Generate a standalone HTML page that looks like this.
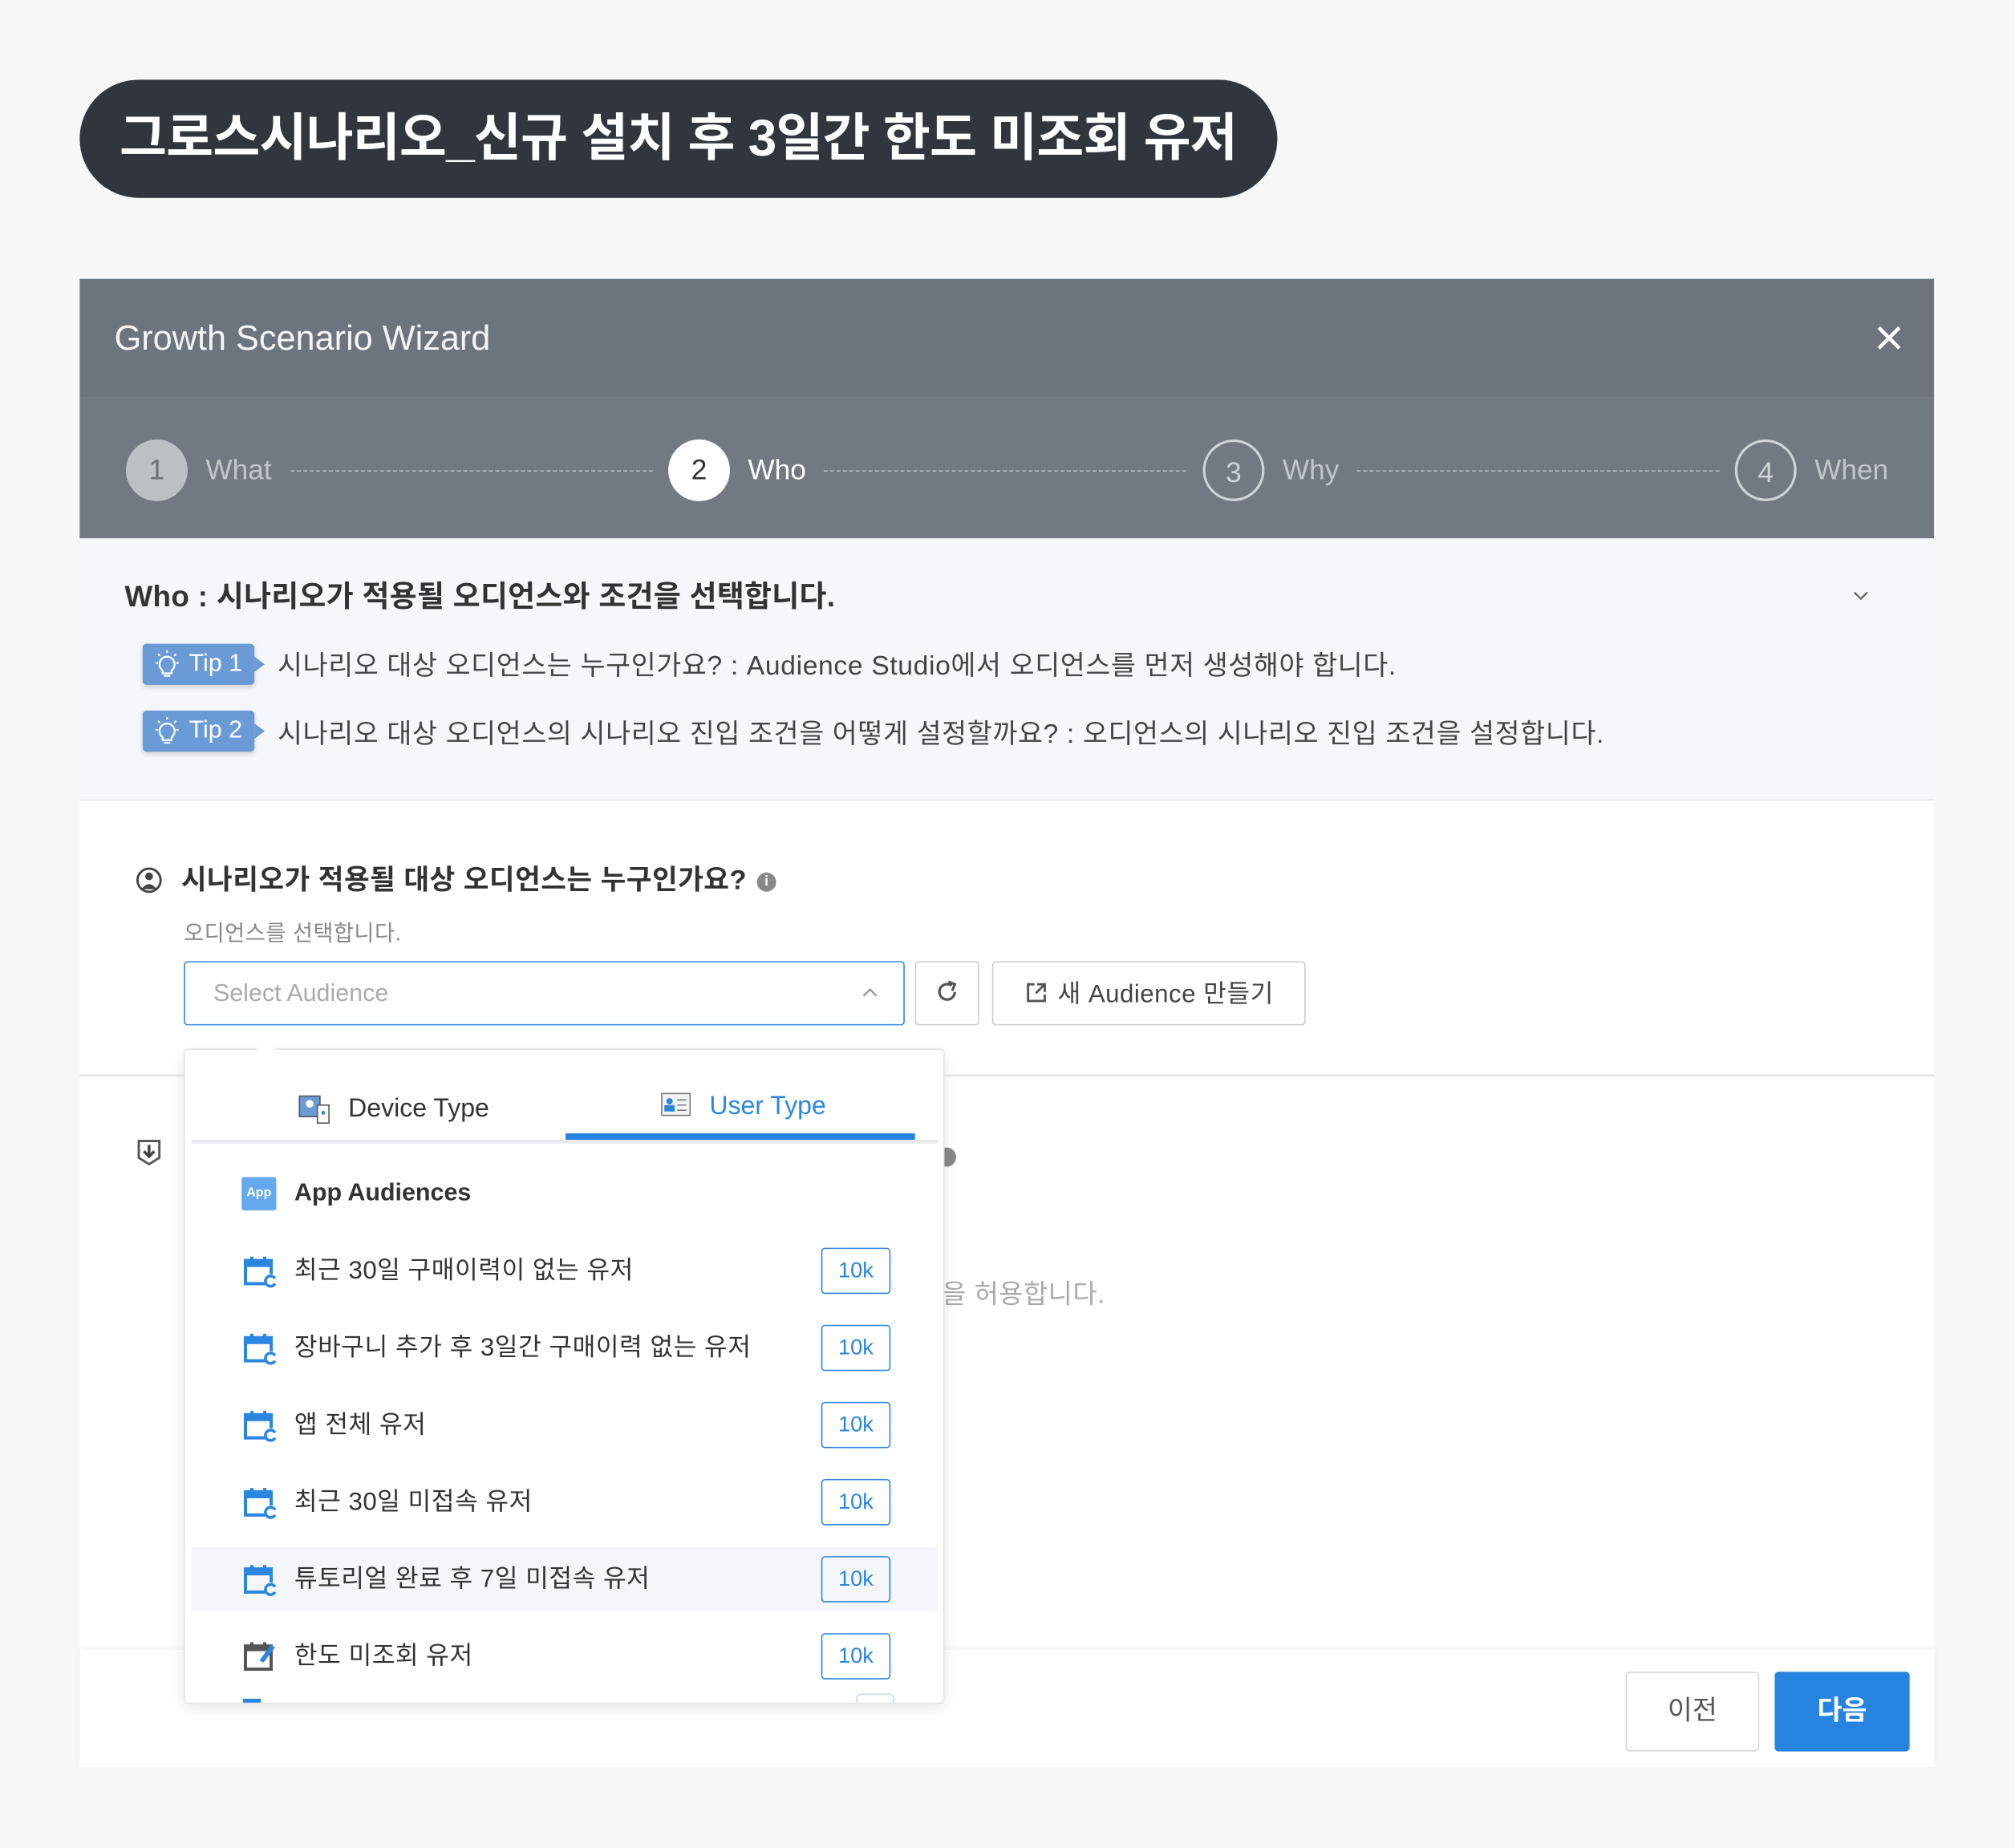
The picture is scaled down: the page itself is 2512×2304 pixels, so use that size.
<!DOCTYPE html>
<html><head><meta charset="utf-8"><style>
html,body{margin:0;padding:0;width:2512px;height:2304px;overflow:hidden;background:#f7f7f7}
#s{position:absolute;left:0;top:0;width:1568px;height:1438px;transform:scale(1.60204);transform-origin:0 0;font-family:"Liberation Sans","Noto Sans CJK KR",sans-serif;color:#333}
.a{position:absolute}
.pill{left:62px;top:62px;width:932px;height:92px;border-radius:46px;background:#30363c;color:#fff;font-size:40px;font-weight:bold;line-height:92px;padding-left:31px;box-sizing:border-box;letter-spacing:-0.5px}
.circ{width:48px;height:48px;border-radius:50%;box-sizing:border-box;text-align:center;line-height:48px;font-size:22px}
.lbl{font-size:22px;line-height:30px}
.dot{height:0;border-top:1.5px dashed #b9bec4}
.tip{width:87px;height:32px;background:#6a9bd6;border-radius:3px;color:#fff;font-size:19px;line-height:32px;box-shadow:0 2px 4px rgba(0,0,0,.15)}
.tip:after{content:"";position:absolute;right:-8px;top:10px;border-left:8px solid #6a9bd6;border-top:6px solid transparent;border-bottom:6px solid transparent}
.tt{font-size:21px;color:#444;line-height:30px;letter-spacing:0.4px;white-space:nowrap}
.row{left:5px;width:581px;height:50px}
.row .t{position:absolute;left:80px;top:10px;font-size:19.5px;line-height:30px;color:#333;letter-spacing:0.3px}
.row .k{position:absolute;left:490px;top:7px;width:52px;height:34px;border:1.5px solid #2b86e0;border-radius:3px;color:#2b86e0;font-size:17px;text-align:center;line-height:34px}
.row svg{position:absolute;left:40px;top:12px}
</style></head><body><div id="s">
<div class="a pill">그로스시나리오_신규 설치 후 3일간 한도 미조회 유저</div>

<div class="a" style="left:62px;top:217px;width:1443px;height:1158px;background:#fff"></div>
<div class="a" style="left:62px;top:217px;width:1443px;height:92px;background:#6c747e"></div>
<div class="a" style="left:89px;top:246px;color:#f4f5f6;font-size:27px;line-height:34px">Growth Scenario Wizard</div>
<svg class="a" style="left:1459px;top:252px" width="22" height="22"><path d="M3 3L19 19M19 3L3 19" stroke="#fff" stroke-width="2.8"/></svg>
<div class="a" style="left:62px;top:309px;width:1443px;height:110px;background:#727983"></div>
<div class="a circ" style="left:98px;top:342px;background:#bcbfc3;color:#6c7178">1</div>
<div class="a lbl" style="left:160px;top:351px;color:#c2c6ca">What</div>
<div class="a dot" style="left:226px;top:366px;width:282px"></div>
<div class="a circ" style="left:520px;top:342px;background:#fff;color:#333">2</div>
<div class="a lbl" style="left:582px;top:351px;color:#fff">Who</div>
<div class="a dot" style="left:641px;top:366px;width:282px"></div>
<div class="a circ" style="left:936px;top:342px;border:2px solid #d0d4d8;color:#d0d4d8">3</div>
<div class="a lbl" style="left:998px;top:351px;color:#c2c6ca">Why</div>
<div class="a dot" style="left:1056px;top:366px;width:282px"></div>
<div class="a circ" style="left:1350px;top:342px;border:2px solid #d0d4d8;color:#d0d4d8">4</div>
<div class="a lbl" style="left:1412px;top:351px;color:#c2c6ca">When</div>

<div class="a" style="left:62px;top:419px;width:1443px;height:203px;background:#f5f7fb;border-bottom:1.5px solid #e4e8f0"></div>
<div class="a" style="left:97px;top:449px;font-size:23px;font-weight:bold;color:#333;line-height:30px;letter-spacing:0.2px">Who : 시나리오가 적용될 오디언스와 조건을 선택합니다.</div>
<svg class="a" style="left:1442px;top:460px" width="12" height="8"><path d="M1 1L6 6L11 1" stroke="#666" stroke-width="1.5" fill="none"/></svg>
<div class="a tip" style="left:111px;top:501px"><svg class="a" style="left:9px;top:4px" width="20" height="24"><path d="M10 6a6 6 0 0 0-3.5 10.8V19h7v-2.2A6 6 0 0 0 10 6z M7.5 21h5" stroke="#fff" stroke-width="1.4" fill="none"/><path d="M10 1v2M3 4l1.5 1.5M17 4l-1.5 1.5M1 11h2M17 11h2" stroke="#fff" stroke-width="1.2"/></svg><span style="position:absolute;left:36px;top:0">Tip 1</span></div>
<div class="a tt" style="left:216px;top:504px">시나리오 대상 오디언스는 누구인가요? : Audience Studio에서 오디언스를 먼저 생성해야 합니다.</div>
<div class="a tip" style="left:111px;top:553px"><svg class="a" style="left:9px;top:4px" width="20" height="24"><path d="M10 6a6 6 0 0 0-3.5 10.8V19h7v-2.2A6 6 0 0 0 10 6z M7.5 21h5" stroke="#fff" stroke-width="1.4" fill="none"/><path d="M10 1v2M3 4l1.5 1.5M17 4l-1.5 1.5M1 11h2M17 11h2" stroke="#fff" stroke-width="1.2"/></svg><span style="position:absolute;left:36px;top:0">Tip 2</span></div>
<div class="a tt" style="left:216px;top:557px">시나리오 대상 오디언스의 시나리오 진입 조건을 어떻게 설정할까요? : 오디언스의 시나리오 진입 조건을 설정합니다.</div>

<svg class="a" style="left:105px;top:674px" width="22" height="22"><circle cx="11" cy="11" r="9" fill="none" stroke="#444" stroke-width="1.8"/><circle cx="11" cy="8" r="3" fill="#444"/><path d="M5 18Q11 10 17 18Z" fill="#444"/></svg>
<div class="a" style="left:141px;top:670px;font-size:21.5px;font-weight:bold;color:#333;line-height:30px;letter-spacing:0.3px">시나리오가 적용될 대상 오디언스는 누구인가요?</div>
<div class="a" style="left:589px;top:679px;width:15px;height:15px;border-radius:50%;background:#888;color:#fff;font-size:11px;text-align:center;line-height:15px;font-weight:bold">i</div>
<div class="a" style="left:143px;top:715px;font-size:17px;color:#888;line-height:24px;letter-spacing:0.3px">오디언스를 선택합니다.</div>
<div class="a" style="left:143px;top:748px;width:561px;height:50px;border:1.5px solid #2b86e0;border-radius:3px;box-sizing:border-box"></div>
<div class="a" style="left:166px;top:759px;font-size:19px;color:#aaa;line-height:30px">Select Audience</div>
<svg class="a" style="left:671px;top:768px" width="12" height="8"><path d="M1 7L6 2L11 7" stroke="#999" stroke-width="1.5" fill="none"/></svg>
<div class="a" style="left:712px;top:748px;width:50px;height:50px;border:1.5px solid #ccc;border-radius:3px;box-sizing:border-box"></div>
<svg class="a" style="left:726px;top:761px" width="22" height="22"><path d="M17 11A6 6 0 1 1 14.5 6" stroke="#555" stroke-width="2" fill="none"/><path d="M12 3L17 5L15 10" stroke="#555" stroke-width="2" fill="none"/></svg>
<div class="a" style="left:772px;top:748px;width:244px;height:50px;border:1.5px solid #ccc;border-radius:3px;box-sizing:border-box"></div>
<svg class="a" style="left:798px;top:764px" width="17" height="17"><path d="M7 2H2V15H15V10M9 2H15V8M15 2L8 9" stroke="#555" stroke-width="1.8" fill="none"/></svg>
<div class="a" style="left:823px;top:759px;font-size:19.5px;color:#444;line-height:30px;letter-spacing:0.3px">새 Audience 만들기</div>
<div class="a" style="left:62px;top:836px;width:1443px;height:1.5px;background:#e6e8ec"></div>

<svg class="a" style="left:105px;top:886px" width="22" height="22"><path d="M3 2H19V15L11 20L3 15Z" fill="none" stroke="#555" stroke-width="1.8"/><path d="M11 5V13M7 10L11 14L15 10" stroke="#444" stroke-width="2.2" fill="none"/></svg>
<div class="a" style="left:729px;top:893px;width:15px;height:15px;border-radius:50%;background:#888"></div>
<div class="a" style="left:733px;top:993px;font-size:20.5px;color:#aaa;line-height:30px;letter-spacing:0.3px">을 허용합니다.</div>

<div class="a" style="left:62px;top:1284px;width:1443px;height:91px;background:#fff;box-shadow:0 -2px 4px rgba(0,0,0,.06)"></div>
<div class="a" style="left:1265px;top:1301px;width:104px;height:62px;border:1.5px solid #d4d6d9;border-radius:3px;box-sizing:border-box;font-size:21px;color:#555;text-align:center;line-height:60px">이전</div>
<div class="a" style="left:1381px;top:1301px;width:105px;height:62px;background:#2684e0;border-radius:3px;font-size:21px;color:#fff;text-align:center;line-height:62px;font-weight:bold">다음</div>

<div class="a" style="left:143px;top:816px;width:592px;height:510px;background:#fff;border:1px solid #e2e4e8;border-radius:3px;box-sizing:border-box;box-shadow:0 3px 10px rgba(0,0,0,.1);overflow:hidden">
  <svg class="a" style="left:88px;top:34px" width="26" height="24"><rect x="1" y="2" width="16" height="16" fill="#6a9bd6" stroke="#555"/><circle cx="9" cy="8" r="3" fill="#fff"/><rect x="15" y="9" width="9" height="14" fill="#fff" stroke="#555"/><circle cx="19.5" cy="15" r="1.5" fill="#2b86e0"/></svg>
  <div class="a" style="left:127px;top:31px;font-size:20px;color:#333;line-height:30px">Device Type</div>
  <svg class="a" style="left:370px;top:33px" width="24" height="20"><rect x="1" y="1" width="22" height="17" fill="#f4f4f4" stroke="#777"/><circle cx="7" cy="7" r="2.5" fill="#2b86e0"/><rect x="3" y="10" width="8" height="5" fill="#2b86e0"/><path d="M13 6H20M13 10H20M13 14H20" stroke="#777"/></svg>
  <div class="a" style="left:408px;top:29px;font-size:20px;color:#2b86e0;line-height:30px">User Type</div>
  <div class="a" style="left:5px;top:70px;width:581px;height:3px;background:#e8eaee"></div>
  <div class="a" style="left:296px;top:65px;width:272px;height:5px;background:#2684e0"></div>
  <div class="a" style="left:44px;top:99px;width:27px;height:26px;background:#64a8ee;border-radius:2px;color:#fff;font-size:10px;font-weight:bold;text-align:center;line-height:26px">App</div>
  <div class="a" style="left:85px;top:98px;font-size:19px;font-weight:bold;color:#333;line-height:28px">App Audiences</div>
  <div class="a row" style="top:147px"><svg width="28" height="28"><rect x="2" y="5" width="20" height="18" fill="none" stroke="#2b86e0" stroke-width="2.5"/><rect x="2" y="5" width="20" height="5" fill="#2b86e0"/><path d="M7 2V7M17 2V7" stroke="#2b86e0" stroke-width="2.5"/><circle cx="22" cy="21" r="5.5" fill="#fff"/><path d="M25 19A4 4 0 1 0 25 23" stroke="#2b86e0" stroke-width="2.2" fill="none"/></svg><div class="t">최근 30일 구매이력이 없는 유저</div><div class="k">10k</div></div>
  <div class="a row" style="top:207px"><svg width="28" height="28"><rect x="2" y="5" width="20" height="18" fill="none" stroke="#2b86e0" stroke-width="2.5"/><rect x="2" y="5" width="20" height="5" fill="#2b86e0"/><path d="M7 2V7M17 2V7" stroke="#2b86e0" stroke-width="2.5"/><circle cx="22" cy="21" r="5.5" fill="#fff"/><path d="M25 19A4 4 0 1 0 25 23" stroke="#2b86e0" stroke-width="2.2" fill="none"/></svg><div class="t">장바구니 추가 후 3일간 구매이력 없는 유저</div><div class="k">10k</div></div>
  <div class="a row" style="top:267px"><svg width="28" height="28"><rect x="2" y="5" width="20" height="18" fill="none" stroke="#2b86e0" stroke-width="2.5"/><rect x="2" y="5" width="20" height="5" fill="#2b86e0"/><path d="M7 2V7M17 2V7" stroke="#2b86e0" stroke-width="2.5"/><circle cx="22" cy="21" r="5.5" fill="#fff"/><path d="M25 19A4 4 0 1 0 25 23" stroke="#2b86e0" stroke-width="2.2" fill="none"/></svg><div class="t">앱 전체 유저</div><div class="k">10k</div></div>
  <div class="a row" style="top:327px"><svg width="28" height="28"><rect x="2" y="5" width="20" height="18" fill="none" stroke="#2b86e0" stroke-width="2.5"/><rect x="2" y="5" width="20" height="5" fill="#2b86e0"/><path d="M7 2V7M17 2V7" stroke="#2b86e0" stroke-width="2.5"/><circle cx="22" cy="21" r="5.5" fill="#fff"/><path d="M25 19A4 4 0 1 0 25 23" stroke="#2b86e0" stroke-width="2.2" fill="none"/></svg><div class="t">최근 30일 미접속 유저</div><div class="k">10k</div></div>
  <div class="a row" style="top:387px;background:#f4f6fa"><svg width="28" height="28"><rect x="2" y="5" width="20" height="18" fill="none" stroke="#2b86e0" stroke-width="2.5"/><rect x="2" y="5" width="20" height="5" fill="#2b86e0"/><path d="M7 2V7M17 2V7" stroke="#2b86e0" stroke-width="2.5"/><circle cx="22" cy="21" r="5.5" fill="#f4f6fa"/><path d="M25 19A4 4 0 1 0 25 23" stroke="#2b86e0" stroke-width="2.2" fill="none"/></svg><div class="t">튜토리얼 완료 후 7일 미접속 유저</div><div class="k">10k</div></div>
  <div class="a row" style="top:447px"><svg width="28" height="28"><rect x="2" y="5" width="20" height="18" fill="none" stroke="#555" stroke-width="2.5"/><rect x="2" y="5" width="20" height="4" fill="#555"/><path d="M7 2V7M17 2V7" stroke="#555" stroke-width="2.5"/><path d="M13 16L22 4L25 6L16 18Z" fill="#2b86e0"/></svg><div class="t">한도 미조회 유저</div><div class="k">10k</div></div>
  <div class="a" style="left:45px;top:505px;width:14px;height:4px;background:#2b86e0"></div>
  <div class="a" style="left:522px;top:501px;width:28px;height:10px;border:1.5px solid #c8dcf2;border-radius:4px"></div>
</div>
<div class="a" style="left:199px;top:809px;width:0;height:0;border-left:8px solid transparent;border-right:8px solid transparent;border-bottom:8px solid #fff"></div>
</div></body></html>
